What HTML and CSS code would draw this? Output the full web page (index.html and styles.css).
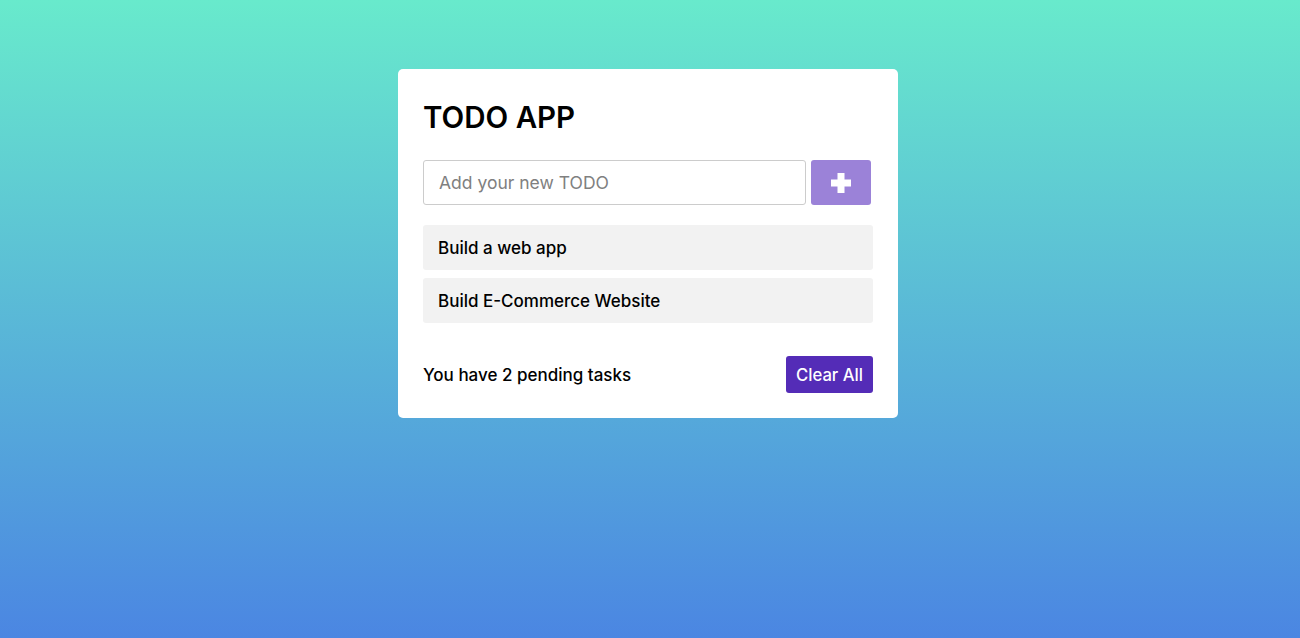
FILE: index.html
```html
<!DOCTYPE html>
<html lang="en">
<head>
<meta charset="utf-8">
<title>Todo App</title>
<link rel="stylesheet" href="styles.css">
</head>
<body>
<div class="wrapper">
  <header class="title">TODO APP</header>
  <div class="input-field">
    <input type="text" class="todo-input" placeholder="Add your new TODO">
    <button class="add-btn" aria-label="Add">
      <svg width="20" height="20" viewBox="0 0 20 20"><path d="M6.5 0h7v6.5H20v7h-6.5V20h-7v-6.5H0v-7h6.5z" fill="#fff"/></svg>
    </button>
  </div>
  <ul class="todo-list">
    <li class="todo-item">Build a web app</li>
    <li class="todo-item">Build E-Commerce Website</li>
  </ul>
  <div class="footer">
    <span class="pending">You have 2 pending tasks</span>
    <button class="clear-btn">Clear All</button>
  </div>
</div>
</body>
</html>
```

FILE: styles.css
```css
* { box-sizing: border-box; margin: 0; padding: 0; }
html, body { height: 100%; }
body {
  font-family: "Inter", "Open Sans", sans-serif;
  background: linear-gradient(to bottom, #68eacc 0%, #4b86e2 100%);
  min-height: 638px;
  padding-top: 69px;
}
.wrapper {
  width: 500px;
  margin-left: calc(50% - 252px);
  background: #fff;
  border-radius: 5px;
  padding: 25px;
}
.title {
  display: block;
  font-size: 29.5px;
  font-weight: 600;
  line-height: 46px;
  color: #000;
}
.input-field {
  display: flex;
  height: 45px;
  margin-top: 20px;
  gap: 5px;
}
.todo-input {
  width: 383px;
  height: 45px;
  border: 1px solid #ccc;
  border-radius: 3px;
  padding-left: 15px;
  font-family: inherit;
  font-size: 17.5px;
  color: #000;
  outline: none;
}
.todo-input::placeholder { color: #808080; }
.add-btn {
  width: 60px;
  height: 45px;
  border: none;
  border-radius: 3px;
  background: #9b82d8;
  display: flex;
  align-items: center;
  justify-content: center;
  cursor: pointer;
}
.todo-list {
  list-style: none;
  margin-top: 20px;
}
.todo-item {
  height: 45px;
  line-height: 47px;
  overflow: hidden;
  background: #f2f2f2;
  border-radius: 3px;
  padding: 0 15px;
  margin-bottom: 8px;
  font-size: 17px;
  font-weight: 500;
  color: #000;
}
.footer {
  display: flex;
  align-items: center;
  justify-content: space-between;
  margin-top: 33px;
  height: 37px;
}
.pending {
  font-size: 17px;
  font-weight: 500;
  color: #000;
}
.clear-btn {
  height: 37px;
  width: 87px;
  border: none;
  border-radius: 3px;
  background: #542cb7;
  color: #fff;
  font-family: inherit;
  font-size: 16.7px;
  font-weight: 500;
  cursor: pointer;
}
```
